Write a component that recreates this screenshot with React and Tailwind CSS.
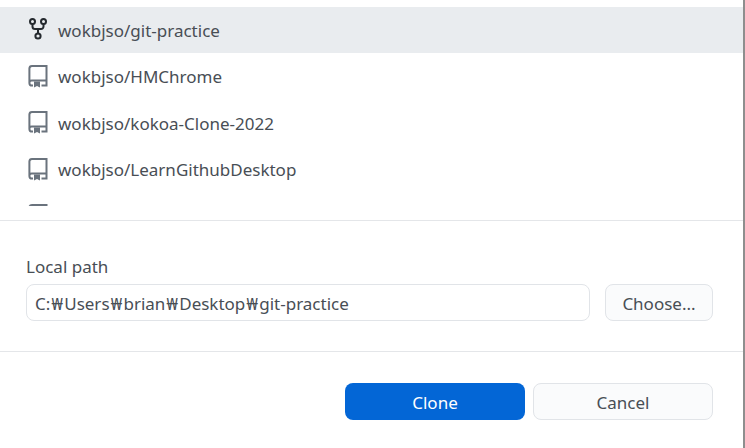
import React from 'react';

const repos = [
  { name: 'wokbjso/git-practice', height: 'h-[46px]' },
  { name: 'wokbjso/HMChrome', height: 'h-[47px]' },
  { name: 'wokbjso/kokoa-Clone-2022', height: 'h-[46px]' },
  { name: 'wokbjso/LearnGithubDesktop', height: 'h-[47px]' },
  { name: '', height: 'h-[46px]' },
];
const pathParts = ['C:', 'Users', 'brian', 'Desktop', 'git-practice'];

function ForkIcon() {
  return (
    <svg width="20" height="24" viewBox="0 0 20 24" fill="none" stroke="#24292e" strokeWidth="2" className="shrink-0">
      <circle cx="4.5" cy="3.5" r="2.5" />
      <circle cx="15.5" cy="3.5" r="2.5" />
      <circle cx="10" cy="18" r="2.6" />
      <path d="M4.5 6v2.5a2.5 2.5 0 0 0 2.5 2.5h6a2.5 2.5 0 0 0 2.5-2.5V6M10 11v4.5" />
    </svg>
  );
}

function RepoIcon() {
  return (
    <svg width="20" height="24" viewBox="0 0 20 24" fill="none" className="shrink-0">
      <path d="M5 20.5H4a2.6 2.6 0 0 1-2.6-2.6V3.5A2.6 2.6 0 0 1 4 1h14.5v19.5h-5M1.4 17.6A2.4 2.4 0 0 1 3.8 15.6H18.5" stroke="#6a737d" strokeWidth="2" />
      <path d="M6 16.5h6V22.5l-3-1.6L6 22.5z" fill="#6a737d" />
    </svg>
  );
}

export default function App() {
  return (
    <div className="w-[745px] h-[448px] bg-white overflow-hidden flex font-['Noto_Sans','Noto_Sans_CJK_KR',sans-serif] text-[17px] text-[#484e55]">
      <div className="flex-1 flex flex-col min-w-0">
        <div className="h-[221px] pt-[7px] border-b border-[#e4e6e9] shrink-0">
          <div className="h-[199px] overflow-hidden">
            {repos.map((repo, i) => (
              <div key={i} className={`${repo.height} flex items-center pl-[28px] gap-[10px] ${i === 0 ? 'bg-[#e9ecef]' : ''}`}>
                {i === 0 ? <ForkIcon /> : <RepoIcon />}
                {repo.name && <span className={`leading-none ${i === 0 ? 'pt-px' : ''}`}>{repo.name}</span>}
              </div>
            ))}
          </div>
        </div>

        <div className="h-[131px] border-b border-[#e4e6e9] px-[26px] pt-[35px] shrink-0">
          <label className="block leading-[22px] mb-[6px]">Local path</label>
          <div className="flex gap-[15px]">
            <div className="w-[564px] h-[37px] border border-[#e1e4e8] rounded-[8px] flex items-center pl-[8px] pt-[2px]">
              <span>
                {pathParts.map((part, i) => (
                  <React.Fragment key={part}>
                    {i > 0 && <span className="px-[1.25px]">₩</span>}
                    {part}
                  </React.Fragment>
                ))}
              </span>
            </div>
            <button className="w-[108px] h-[37px] border border-[#e1e4e8] rounded-[8px] bg-[#fafbfc] pt-[2px]">Choose...</button>
          </div>
        </div>

        <div className="flex justify-end gap-[8px] pt-[31px] pr-[30px]">
          <button className="w-[180px] h-[37px] rounded-[8px] bg-[#0366d6] text-white pt-[2px]">Clone</button>
          <button className="w-[180px] h-[37px] rounded-[8px] border border-[#e1e4e8] bg-[#fafbfc] pt-[2px]">Cancel</button>
        </div>
      </div>
      <div className="w-[2px] bg-[#8e8e8e] shrink-0" />
    </div>
  );
}
